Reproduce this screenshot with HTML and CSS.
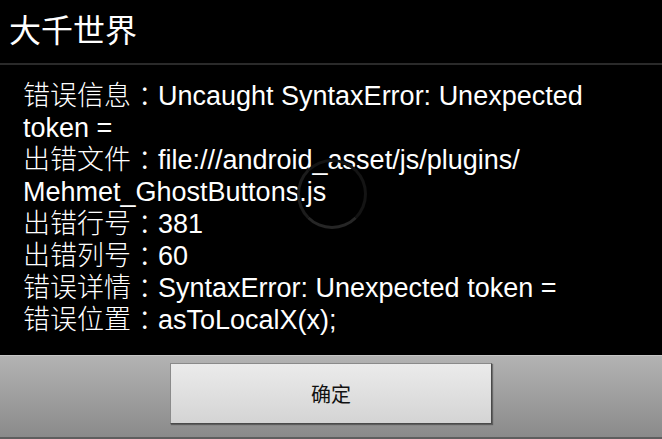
FILE: index.html
```html
<!DOCTYPE html>
<html lang="zh">
<head>
<meta charset="utf-8">
<title>大千世界</title>
<link rel="stylesheet" href="styles.css">
</head>
<body>
<div class="dialog">
  <header class="title-bar">
    <h1 class="title">大千世界</h1>
  </header>
  <main class="message">
    <p class="text"><span class="label">错误信息</span><span class="colon">：</span>Uncaught SyntaxError: Unexpected<br>token =<br><span class="label">出错文件</span><span class="colon">：</span>file:///android_asset/js/plugins/<br>Mehmet_GhostButtons.js<br><span class="label">出错行号</span><span class="colon">：</span>381<br><span class="label">出错列号</span><span class="colon">：</span>60<br><span class="label">错误详情</span><span class="colon">：</span>SyntaxError: Unexpected token =<br><span class="label">错误位置</span><span class="colon">：</span>asToLocalX(x);</p>
    <div class="spinner"></div>
  </main>
  <footer class="button-bar">
    <button class="ok-button" type="button">确定</button>
  </footer>
</div>
</body>
</html>
```
FILE: styles.css
```css
html, body {
  margin: 0;
  padding: 0;
  background: #000;
}

.dialog {
  width: 662px;
  height: 439px;
  display: flex;
  flex-direction: column;
  background: #000;
  font-family: "Liberation Sans", "Noto Sans CJK SC", sans-serif;
  color: #fff;
  overflow: hidden;
}

.title-bar {
  border-bottom: 2px solid #2a2a2a;
  display: flex;
  align-items: center;
  padding-left: 9px;
  padding-bottom: 7px;
  height: 56px;
}

.title {
  margin: 0;
  font-family: "Noto Sans CJK SC", sans-serif;
  font-size: 32px;
  font-weight: normal;
  line-height: 40px;
  color: #fff;
}

.message {
  position: relative;
  flex: 1;
  padding: 15px 0 0 23px;
}

.text {
  margin: 0;
  font-size: 27px;
  font-weight: normal;
  line-height: 32px;
  color: #fff;
}

.label {
  font-family: "Noto Sans CJK SC", sans-serif;
  font-weight: 300;
  line-height: 1;
}

.colon {
  font-family: "Noto Sans CJK SC", sans-serif;
  font-weight: 300;
  line-height: 1;
  margin-left: 7px;
  letter-spacing: -7px;
}

.spinner {
  position: absolute;
  left: 297px;
  top: 94px;
  width: 64px;
  height: 64px;
  border-radius: 50%;
  border: 3px solid #141414;
  border-bottom-color: #262626;
  border-left-color: #1c1c1c;
}

.button-bar {
  height: 84px;
  flex: none;
  border-top: 1px solid #c6c6c6;
  border-bottom: 2px solid #5e5e5e;
  background: linear-gradient(#b3b3b3, #8a8a8a);
  display: flex;
  justify-content: center;
  align-items: flex-start;
  padding-top: 7px;
  box-sizing: border-box;
}

.ok-button {
  width: 322px;
  height: 61px;
  margin: 0;
  padding: 0;
  border: 1px solid #8a8a8a;
  border-right-color: #4a4a4a;
  border-bottom-color: #4a4a4a;
  background: linear-gradient(#ebebeb, #d4d4d4);
  box-shadow: 1px 1px 1px rgba(0, 0, 0, 0.35);
  font-family: "Noto Sans CJK SC", sans-serif;
  font-size: 20px;
  color: #111;
}
```
